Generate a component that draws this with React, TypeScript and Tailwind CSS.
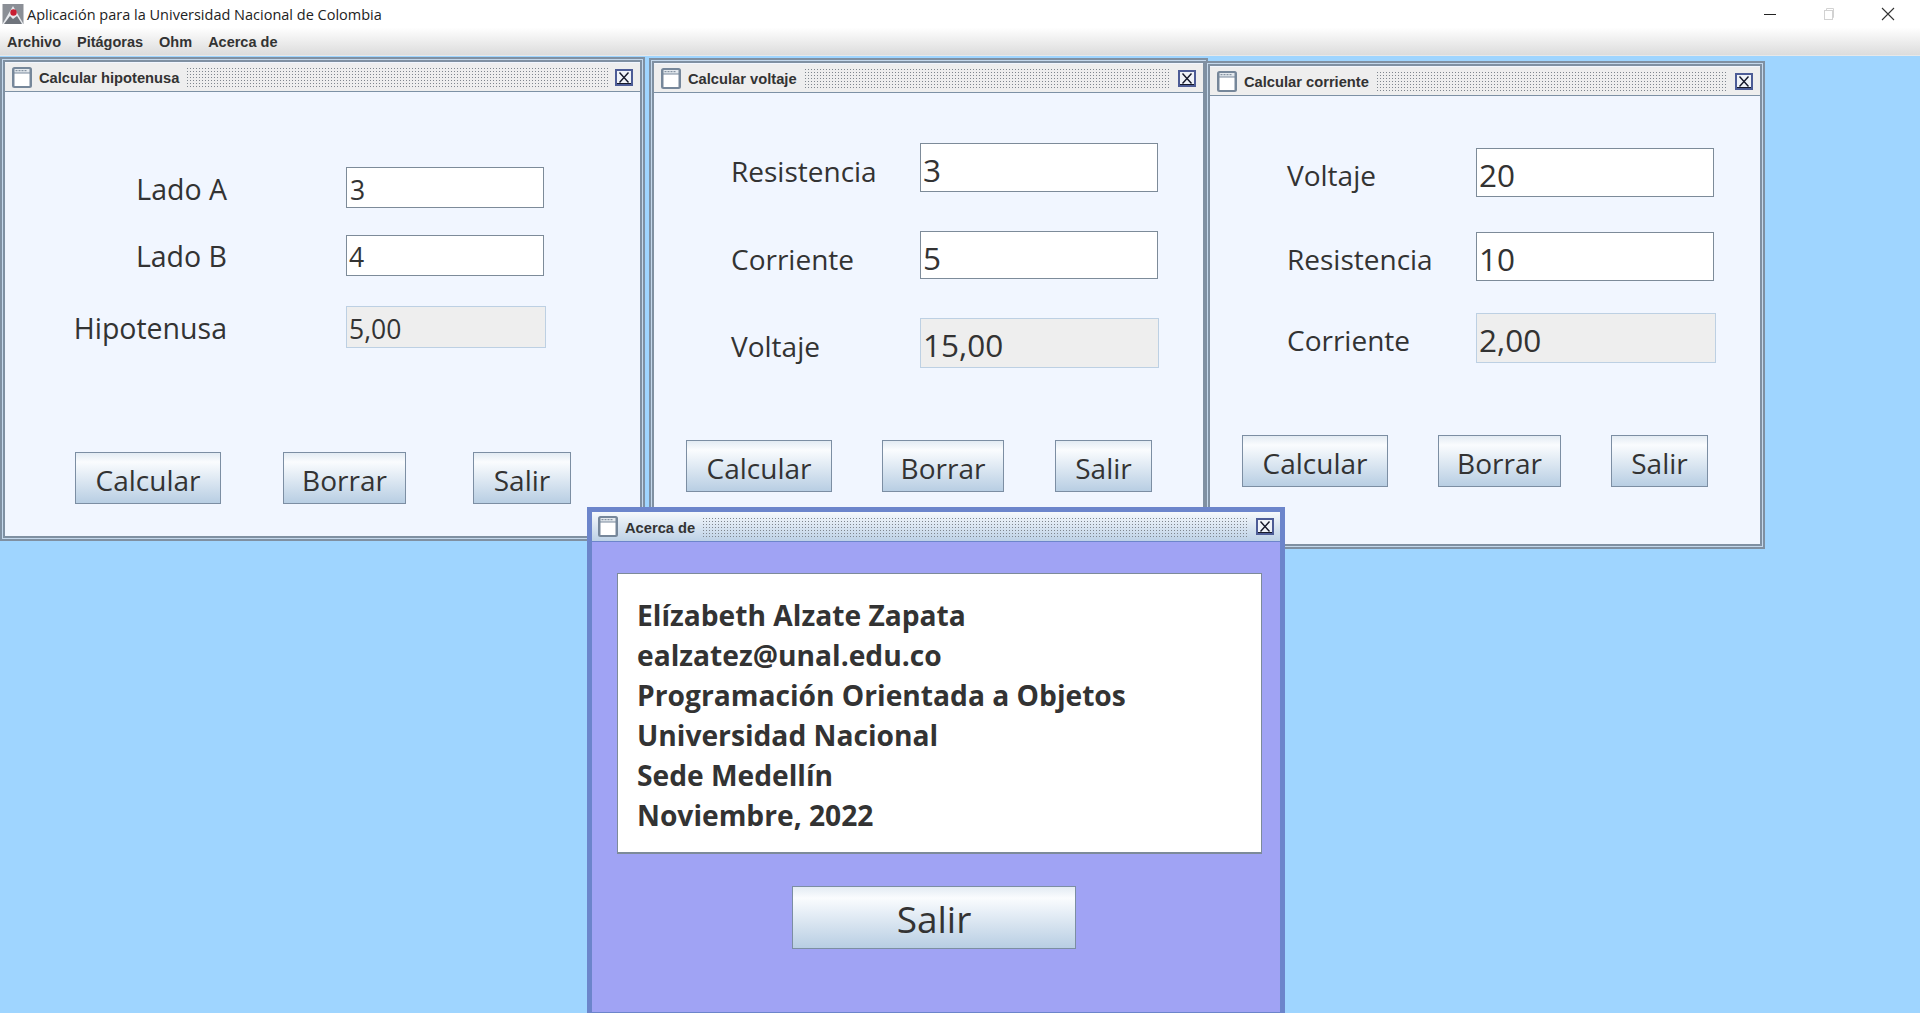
import React from "react";

const sans = "font-['Open_Sans','Noto_Sans',sans-serif]";

function WinIcon() {
  return (
    <svg width="20" height="21" viewBox="0 0 20 21" className="shrink-0">
      <rect x="0" y="0" width="20" height="21" rx="2.5" fill="#76879a" />
      <rect x="2.5" y="6.5" width="15" height="12.5" fill="#ffffff" />
      <rect x="2.5" y="2" width="15" height="3.5" fill="#e4e9ee" />
      <path d="M3.5 3.7h2M6.5 3.7h2M9.5 3.7h2M12.5 3.7h2" stroke="#6f7f90" strokeWidth="1" />
    </svg>
  );
}

function CloseBtn() {
  return (
    <svg width="18" height="17" viewBox="0 0 18 17" className="shrink-0">
      <rect x="0" y="0" width="18" height="17" fill="#4d5c96" />
      <rect x="2" y="2" width="14" height="13" fill="#f0f3f8" />
      <path d="M4.5 3.5 13.5 13.5M13.5 3.5 4.5 13.5" stroke="#15182a" strokeWidth="1.4" />
      <rect x="2" y="14" width="14" height="1" fill="#15182a" />
    </svg>
  );
}

function AppIcon() {
  return (
    <svg width="22" height="22" viewBox="0 0 22 22" className="shrink-0">
      <rect x="0.5" y="1" width="21" height="20" fill="#8b8f96" />
      <path d="M0.5 21 11 3l10.5 18z" fill="#e8eaee" />
      <path d="M2 21 8 13l3 3 4-3 5 8z" fill="#6f747c" />
      <circle cx="11.5" cy="9.5" r="3.2" fill="#c81e32" />
    </svg>
  );
}

function TitleBar({ title, active }: { title: string; active?: boolean }) {
  return (
    <div
      className={
        active
          ? "flex h-[30px] items-center gap-[7px] border-b border-[#6c85cb] bg-gradient-to-b from-[#f6f9fc] to-[#bdd1e6] px-[6px]"
          : "flex h-[29px] items-center gap-[7px] border-b border-[#7d91a5] bg-[#eeeeee] px-[7px]"
      }
    >
      <WinIcon />
      <span className="whitespace-nowrap pt-[3px] font-['Liberation_Sans',sans-serif] text-[14.7px] font-bold leading-none text-[#333333]">
        {title}
      </span>
      <div className="h-[20px] flex-1 bg-[radial-gradient(#7f868e_0.8px,transparent_0.9px)] bg-[length:3px_3px]" />
      <CloseBtn />
    </div>
  );
}

function Btn({ className, children }: { className: string; children: string }) {
  return (
    <div
      className={`flex items-center justify-center border border-[#7c8ea3] bg-gradient-to-b from-[#e3ebf3] via-[#fafcfe] via-[18%] to-[#b8cee3] pt-[3px] ${sans} text-[#333333] ${className}`}
    >
      {children}
    </div>
  );
}

function Frame({ className, children }: { className: string; children: React.ReactNode }) {
  return (
    <section className={`absolute border-[2px] border-[#7f90a2] ${className}`}>
      <div className="h-full border border-[#c4d8ec]">
        <div className="h-full border-[2px] border-[#7f90a2] bg-[#f1f6ff]">{children}</div>
      </div>
    </section>
  );
}

export default function App() {
  return (
    <div className="flex h-[1013px] w-[1920px] flex-col overflow-hidden bg-[#9fd5ff]">
      <header className="h-[56px] shrink-0 border-b border-[#e8e8e8] bg-gradient-to-b from-white from-[50%] to-[#dcdcdc]">
        <div className="flex h-[28px] items-center">
          <div className="ml-[2px]"><AppIcon /></div>
          <span className={`ml-[3px] pt-[2px] ${sans} text-[14.5px] leading-none text-[#222222]`}>
            Aplicación para la Universidad Nacional de Colombia
          </span>
          <div className="ml-auto flex items-center">
            <div className="mr-[47px] h-[1px] w-[12px] bg-[#222222]" />
            <svg width="12" height="14" viewBox="0 0 12 14" className="mr-[46px]" fill="none" stroke="#d2d2d2">
              <rect x="1.5" y="3.5" width="8" height="9" />
              <path d="M3.5 3.5v-2h7v9h-1" />
            </svg>
            <svg width="14" height="14" viewBox="0 0 14 14" className="mr-[25px]" stroke="#333333" strokeWidth="1.1">
              <path d="M1 1l12 12M13 1 1 13" />
            </svg>
          </div>
        </div>
        <nav className="flex h-[27px] items-center gap-[16px] pl-[7px] pt-[1px] font-['Liberation_Sans',sans-serif] text-[14.5px] font-bold leading-none text-[#333333]">
          <span>Archivo</span>
          <span>Pitágoras</span>
          <span>Ohm</span>
          <span>Acerca de</span>
        </nav>
      </header>

      <main className="relative flex-1">
        {/* Calcular hipotenusa */}
        <Frame className="left-0 top-[1px] h-[484px] w-[645px]">
          <div className="pt-[1px]" />
          <TitleBar title="Calcular hipotenusa" />
          <div className={`pt-[75px] ${sans} text-[#333333]`}>
            <div className="flex items-center">
              <span className="mt-[4px] w-[222px] text-right text-[28.5px] leading-none">Lado A</span>
              <div className="ml-[119px] flex h-[41px] w-[198px] items-center border border-[#7d8b99] bg-white pl-[3px] pt-[5px] text-[26.5px] leading-none">3</div>
            </div>
            <div className="mt-[27px] flex items-center">
              <span className="mt-[2px] w-[222px] text-right text-[28.5px] leading-none">Lado B</span>
              <div className="ml-[119px] flex h-[41px] w-[198px] items-center border border-[#7d8b99] bg-white pl-[2px] pt-[4px] text-[26.5px] leading-none">4</div>
            </div>
            <div className="mt-[30px] flex items-center">
              <span className="mt-[2px] w-[222px] text-right text-[28.5px] leading-none">Hipotenusa</span>
              <div className="ml-[119px] flex h-[42px] w-[200px] items-center border border-[#bdd0e3] bg-[#eeeeee] pl-[2px] pt-[4px] text-[26.5px] leading-none">5,00</div>
            </div>
            <div className="mt-[104px] flex pl-[70px]">
              <Btn className="h-[52px] w-[146px] text-[28px]">Calcular</Btn>
              <Btn className="ml-[62px] h-[52px] w-[123px] text-[28px]">Borrar</Btn>
              <Btn className="ml-[67px] h-[52px] w-[98px] text-[28px]">Salir</Btn>
            </div>
          </div>
        </Frame>

        {/* Calcular voltaje */}
        <Frame className="left-[649px] top-[2px] h-[490px] w-[559px]">
          <div className="pt-[1px]" />
          <TitleBar title="Calcular voltaje" />
          <div className={`pt-[50px] pl-[77px] ${sans} text-[#333333]`}>
            <div className="flex items-center">
              <span className="mt-[6px] w-[189px] text-[28px] leading-none">Resistencia</span>
              <div className="flex h-[49px] w-[238px] items-center border border-[#7d8b99] bg-white pl-[2px] pt-[5px] text-[31.5px] leading-none">3</div>
            </div>
            <div className="mt-[39px] flex items-center">
              <span className="mt-[7px] w-[189px] text-[28px] leading-none">Corriente</span>
              <div className="flex h-[48px] w-[238px] items-center border border-[#7d8b99] bg-white pl-[2px] pt-[5px] text-[31.5px] leading-none">5</div>
            </div>
            <div className="mt-[39px] flex items-center">
              <span className="mt-[6px] w-[189px] text-[28px] leading-none">Voltaje</span>
              <div className="flex h-[50px] w-[239px] items-center border border-[#bdd0e3] bg-[#eeeeee] pl-[2px] pt-[4px] text-[31.5px] leading-none">15,00</div>
            </div>
            <div className="-ml-[45px] mt-[72px] flex">
              <Btn className="h-[52px] w-[146px] text-[28px]">Calcular</Btn>
              <Btn className="ml-[50px] h-[52px] w-[122px] text-[28px]">Borrar</Btn>
              <Btn className="ml-[51px] h-[52px] w-[97px] text-[28px]">Salir</Btn>
            </div>
          </div>
        </Frame>

        {/* Calcular corriente */}
        <Frame className="left-[1205px] top-[5px] h-[488px] w-[560px]">
          <div className="pt-[1px]" />
          <TitleBar title="Calcular corriente" />
          <div className={`pt-[52px] pl-[77px] ${sans} text-[#333333]`}>
            <div className="flex items-center">
              <span className="mt-[4px] w-[189px] text-[28px] leading-none">Voltaje</span>
              <div className="flex h-[49px] w-[238px] items-center border border-[#7d8b99] bg-white pl-[2px] pt-[5px] text-[31.5px] leading-none">20</div>
            </div>
            <div className="mt-[35px] flex items-center">
              <span className="mt-[5px] w-[189px] text-[28px] leading-none">Resistencia</span>
              <div className="flex h-[49px] w-[238px] items-center border border-[#7d8b99] bg-white pl-[2px] pt-[5px] text-[31.5px] leading-none">10</div>
            </div>
            <div className="mt-[32px] flex items-center">
              <span className="mt-[4px] w-[189px] text-[28px] leading-none">Corriente</span>
              <div className="flex h-[50px] w-[240px] items-center border border-[#bdd0e3] bg-[#eeeeee] pl-[2px] pt-[4px] text-[31.5px] leading-none">2,00</div>
            </div>
            <div className="-ml-[45px] mt-[72px] flex">
              <Btn className="h-[52px] w-[146px] text-[28px]">Calcular</Btn>
              <Btn className="ml-[50px] h-[52px] w-[123px] text-[28px]">Borrar</Btn>
              <Btn className="ml-[50px] h-[52px] w-[97px] text-[28px]">Salir</Btn>
            </div>
          </div>
        </Frame>

        {/* Acerca de */}
        <section className="absolute left-[587px] top-[451px] h-[510px] w-[698px] border-[5px] border-[#6c85cb]">
          <div className="h-full bg-[#a0a3f4]">
            <TitleBar title="Acerca de" active />
            <div className={`ml-[25px] mr-[18px] mt-[31px] h-[281px] border border-b-[2px] border-[#7d8b99] bg-white pl-[19px] pt-[21px] ${sans} text-[28.2px] font-bold leading-[40px] text-[#333333]`}>
              <p>Elízabeth Alzate Zapata</p>
              <p>ealzatez@unal.edu.co</p>
              <p>Programación Orientada a Objetos</p>
              <p>Universidad Nacional</p>
              <p>Sede Medellín</p>
              <p>Noviembre, 2022</p>
            </div>
            <Btn className="ml-[200px] mt-[32px] h-[63px] w-[284px] text-[37px]">Salir</Btn>
          </div>
        </section>
      </main>
    </div>
  );
}
